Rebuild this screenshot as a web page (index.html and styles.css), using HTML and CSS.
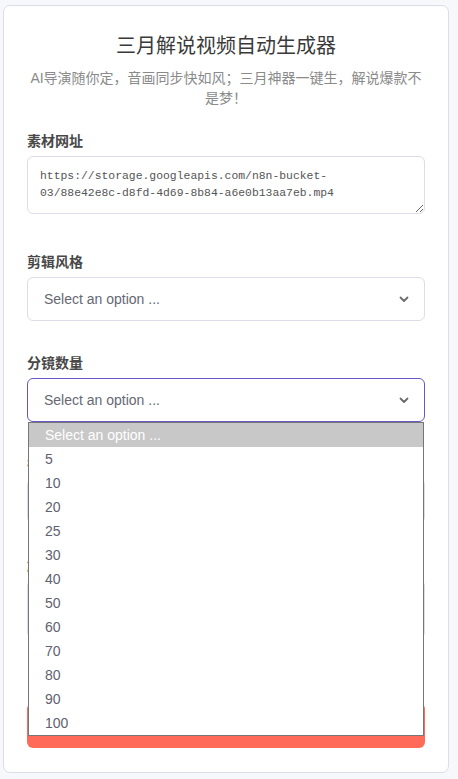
FILE: index.html
```html
<!DOCTYPE html>
<html lang="zh">
<head>
<meta charset="utf-8">
<title>三月解说视频自动生成器</title>
<link rel="stylesheet" href="styles.css">
</head>
<body>
<main class="card">
  <h1 class="title">三月解说视频自动生成器</h1>
  <p class="subtitle">AI导演随你定，音画同步快如风；三月神器一键生，解说爆款不是梦！</p>

  <div class="field field-text">
    <label class="label">素材网址</label>
    <textarea class="textarea" rows="2" spellcheck="false">https://storage.googleapis.com/n8n-bucket-03/88e42e8c-d8fd-4d69-8b84-a6e0b13aa7eb.mp4</textarea>
  </div>

  <div class="field">
    <label class="label">剪辑风格</label>
    <div class="select">
      <span class="select-text">Select an option ...</span>
      <svg class="chev" width="12" height="8" viewBox="0 0 12 8"><path d="M2.5 2.5 L6 6 L9.5 2.5" fill="none" stroke="#6b6b6b" stroke-width="1.8" stroke-linecap="round" stroke-linejoin="round"/></svg>
    </div>
  </div>

  <div class="field dd-host">
    <label class="label">分镜数量</label>
    <div class="select focused">
      <span class="select-text">Select an option ...</span>
      <svg class="chev" width="12" height="8" viewBox="0 0 12 8"><path d="M2.5 2.5 L6 6 L9.5 2.5" fill="none" stroke="#6b6b6b" stroke-width="1.8" stroke-linecap="round" stroke-linejoin="round"/></svg>
    </div>
    <ul class="dropdown">
      <li class="opt active">Select an option ...</li>
      <li class="opt">5</li>
      <li class="opt">10</li>
      <li class="opt">20</li>
      <li class="opt">25</li>
      <li class="opt">30</li>
      <li class="opt">40</li>
      <li class="opt">50</li>
      <li class="opt">60</li>
      <li class="opt">70</li>
      <li class="opt">80</li>
      <li class="opt">90</li>
      <li class="opt">100</li>
    </ul>
  </div>

  <div class="field">
    <label class="label">视频比例</label>
    <div class="select">
      <span class="select-text">Select an option ...</span>
    </div>
  </div>

  <div class="field field-text">
    <label class="label">解说要求</label>
    <textarea class="textarea" rows="2"></textarea>
  </div>

  <button class="submit" type="button">开始生成</button>
</main>
</body>
</html>
```

FILE: styles.css
```css
html, body {
  margin: 0;
  padding: 0;
  background: #f7f8fc;
}
body {
  font-family: "Liberation Sans", "Noto Sans CJK SC", sans-serif;
  color: #333;
}
.card {
  box-sizing: border-box;
  width: 446px;
  margin: 5px 0 6px 3px;
  padding: 24px 23px 24px;
  background: #fff;
  border: 1px solid #dcdde9;
  border-radius: 7px;
}
.title {
  margin: 0;
  font-size: 20px;
  font-weight: normal;
  line-height: 32px;
  text-align: center;
  color: #3a3a3a;
}
.subtitle {
  margin: 6px 0 23px;
  font-size: 14px;
  line-height: 20px;
  text-align: center;
  color: #8a8a8a;
}
.field {
  margin-bottom: 32px;
}
.field-text {
  margin-bottom: 38px;
}
.label {
  display: block;
  margin-bottom: 5px;
  font-size: 14px;
  line-height: 20px;
  font-weight: bold;
  color: #484848;
}
.textarea {
  display: block;
  box-sizing: border-box;
  width: 100%;
  height: 58px;
  margin: 0;
  padding: 11px 22px 11px 12px;
  border: 1px solid #dcdde9;
  border-radius: 6px;
  font-family: "Liberation Mono", monospace;
  font-size: 11.4px;
  line-height: 17px;
  color: #555;
  background: #fff;
  resize: vertical;
  outline: none;
}
.select {
  box-sizing: border-box;
  height: 44px;
  padding: 0 14px 0 16px;
  border: 1px solid #dcdde9;
  border-radius: 6px;
  display: flex;
  align-items: center;
  justify-content: space-between;
  background: #fff;
}
.select.focused {
  border-color: #6656c6;
}
.select-text {
  font-size: 14px;
  color: #666874;
}
.chev {
  display: block;
}
.dd-host {
  position: relative;
}
.dropdown {
  position: absolute;
  left: 1px;
  top: 69px;
  width: 396px;
  box-sizing: border-box;
  margin: 0;
  padding: 0;
  list-style: none;
  background: #fff;
  border: 1px solid #767676;
  z-index: 10;
}
.opt {
  height: 24px;
  line-height: 24px;
  padding-left: 16px;
  font-size: 14px;
  color: #5f6170;
}
.opt.active {
  background: #c8c8c8;
  color: #fff;
}
.submit {
  display: block;
  width: 100%;
  height: 45px;
  margin-top: 65px;
  border: none;
  border-radius: 6px;
  background: #ff6b58;
  color: #fff;
  font-size: 16px;
  font-family: inherit;
}
```
